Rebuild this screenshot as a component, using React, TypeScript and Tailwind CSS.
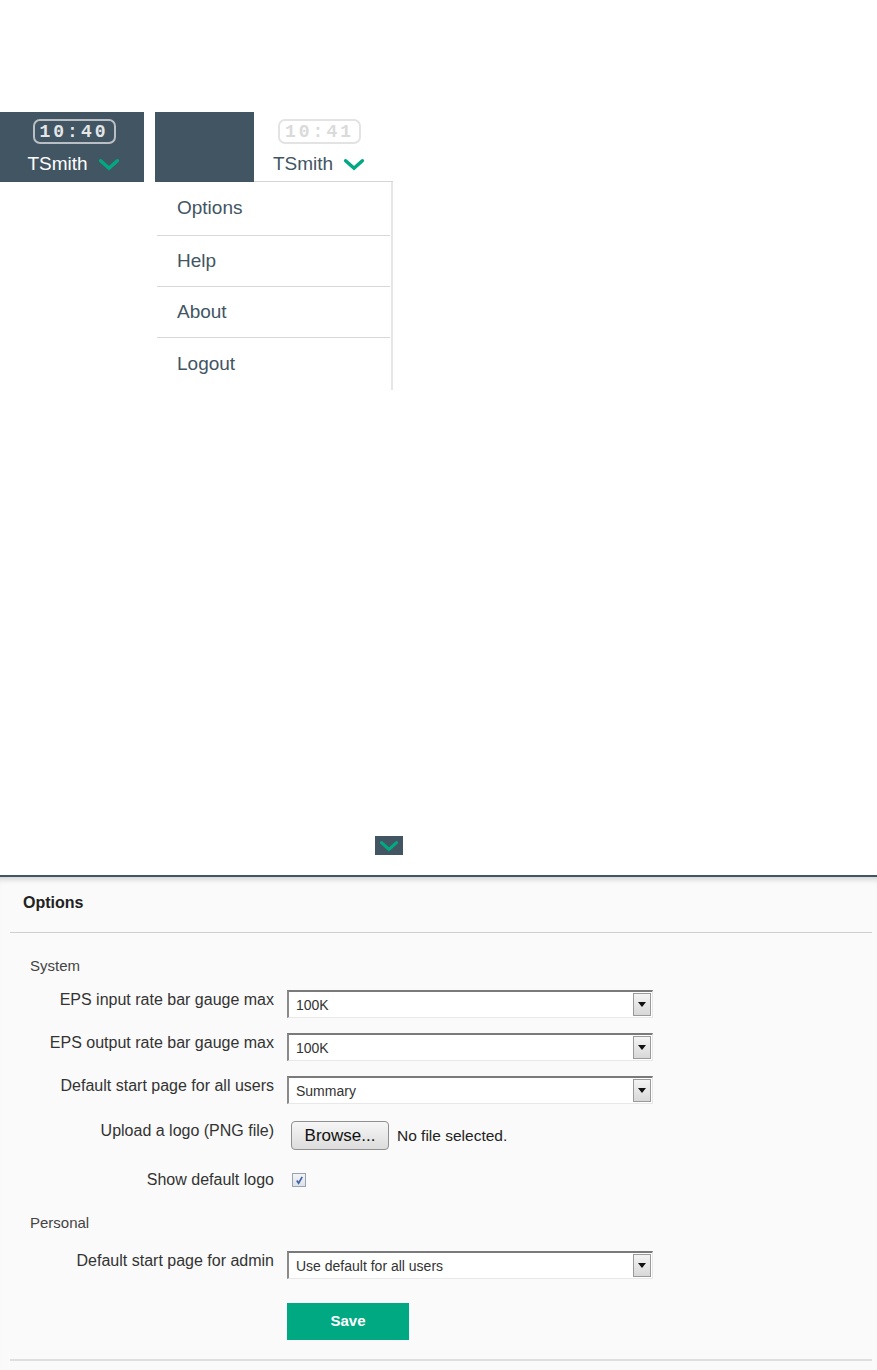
import React from 'react'

const font = { fontFamily: '"Liberation Sans", Arial, sans-serif' }

function Chevron({ className = '' }: { className?: string }) {
  return (
    <svg viewBox="0 0 24 14" className={className} fill="none">
      <polyline points="3,3 12,11 21,3" stroke="#01a982" strokeWidth="3.8" strokeLinecap="round" strokeLinejoin="miter" />
    </svg>
  )
}

function Clock({ time, light }: { time: string; light?: boolean }) {
  return (
    <div
      className={`flex h-[25px] w-[83px] items-center justify-center rounded-[7px] border-2 ${
        light ? 'border-[#e3e3e3] text-[#dadada]' : 'border-[#b9bfc4] text-[#e4e6e8]'
      }`}
    >
      <span className="text-[18px] font-bold leading-none tracking-[3px]" style={{ fontFamily: '"Liberation Mono", monospace' }}>
        {time}
      </span>
    </div>
  )
}

function UserName({ dark }: { dark?: boolean }) {
  return (
    <div className="flex items-center gap-[9px]">
      <span className={`text-[19px] leading-[22px] ${dark ? 'text-white' : 'text-[#425563]'}`}>TSmith</span>
      <Chevron className="h-[13px] w-[24px]" />
    </div>
  )
}

function Row({ label, children, center }: { label: string; children: React.ReactNode; center?: boolean }) {
  return (
    <div className={`flex ${center ? 'items-center' : 'items-start'}`}>
      <div className="w-[274px] text-right text-[16px] leading-[20px] text-[#333]">{label}</div>
      <div className="ml-[13px]">{children}</div>
    </div>
  )
}

function Select({ value }: { value: string }) {
  return (
    <div className="flex h-[28px] w-[366px] border-t-2 border-l-2 border-b border-r border-t-[#7a7a7a] border-l-[#8a8a8a] border-b-[#e8e8e8] border-r-[#e8e8e8] bg-white">
      <div className="flex flex-1 items-center pl-[7px] pt-[2px] text-[14px] text-[#333]">{value}</div>
      <div className="my-[1px] mr-[1px] flex w-[18px] items-center justify-center border border-[#9a9a9a] bg-gradient-to-b from-[#f4f4f4] to-[#d8d8d8]">
        <svg viewBox="0 0 8 5" className="h-[5px] w-[8px]">
          <polygon points="0,0 8,0 4,5" fill="#111" />
        </svg>
      </div>
    </div>
  )
}

const menuItems = [
  { label: 'Options', h: 'h-[54px]' },
  { label: 'Help', h: 'h-[51px]' },
  { label: 'About', h: 'h-[51px]' },
  { label: 'Logout', h: 'h-[52px]' },
]

export default function App() {
  return (
    <div className="min-h-[1370px] w-[877px] bg-white pt-[112px]" style={font}>
      <div className="flex items-start">
        <div className="flex h-[70px] w-[144px] flex-col items-center bg-[#425563] pt-[7px] pl-[4px]">
          <Clock time="10:40" />
          <div className="mt-[9px]">
            <UserName dark />
          </div>
        </div>

        <div className="ml-[11px] w-[238px]">
          <div className="flex h-[70px]">
            <div className="w-[99px] bg-[#425563]" />
            <div className="flex flex-1 flex-col items-center border-b border-[#d6d6d6] bg-white pt-[7px] pr-[8px]">
              <Clock time="10:41" light />
              <div className="mt-[9px]">
                <UserName />
              </div>
            </div>
          </div>
          <div className="border-r-2 border-[#e6e6e6] bg-white">
            {menuItems.map((item, i) => (
              <div
                key={item.label}
                className={`ml-[2px] mr-[1px] flex ${item.h} items-center pl-[20px] text-[19px] text-[#425563] ${
                  i < menuItems.length - 1 ? 'border-b border-[#d8d8d8]' : ''
                }`}
              >
                {item.label}
              </div>
            ))}
          </div>
        </div>
      </div>

      <div className="ml-[375px] mt-[446px] flex h-[19px] w-[28px] items-center justify-center bg-[#425563]">
        <Chevron className="h-[12px] w-[20px]" />
      </div>

      <div className="mt-[20px] border-t-2 border-[#425563] bg-[#fafafa] shadow-[inset_0_7px_6px_-5px_rgba(0,0,0,0.18)]">
        <div className="ml-[10px] mr-[5px] border-b border-[#cfcfcf] pl-[13px] pt-[16px] pb-[19px]">
          <div className="text-[16px] font-bold leading-[20px] text-[#222]">Options</div>
        </div>

        <div className="pl-[30px] pt-[23px] text-[15px] leading-[20px] text-[#444]">System</div>

        <div className="mt-[14px] flex flex-col gap-[15px]">
          <Row label="EPS input rate bar gauge max">
            <Select value="100K" />
          </Row>
          <Row label="EPS output rate bar gauge max">
            <Select value="100K" />
          </Row>
          <Row label="Default start page for all users">
            <Select value="Summary" />
          </Row>
        </div>

        <div className="mt-[17px]">
          <Row label="Upload a logo (PNG file)">
            <div className="ml-[4px] flex items-center">
              <div className="flex h-[29px] w-[98px] items-center justify-center rounded-[4px] border border-[#8f8f8f] bg-gradient-to-b from-[#f6f6f6] to-[#dcdcdc] text-[17px] text-[#111]">
                Browse...
              </div>
              <span className="ml-[8px] text-[15.5px] text-[#222]">No file selected.</span>
            </div>
          </Row>
        </div>

        <div className="mt-[20px]">
          <Row label="Show default logo" center>
            <div className="ml-[5px] flex h-[14px] w-[14px] items-center justify-center border border-[#9aa3ad] bg-gradient-to-b from-[#f2f4f7] to-[#dde2e8]">
              <svg viewBox="0 0 10 10" className="h-[9px] w-[9px]">
                <polyline points="2,5 4,8 8,1" fill="none" stroke="#3b5fa8" strokeWidth="1.8" />
              </svg>
            </div>
          </Row>
        </div>

        <div className="pl-[30px] pt-[23px] text-[15px] leading-[20px] text-[#444]">Personal</div>

        <div className="mt-[18px]">
          <Row label="Default start page for admin">
            <Select value="Use default for all users" />
          </Row>
        </div>

        <div className="ml-[287px] mt-[24px] flex h-[37px] w-[122px] items-center justify-center bg-[#01a982] text-[15px] font-bold text-white">
          Save
        </div>

        <div className="ml-[10px] mr-[5px] mt-[19px] border-b-2 border-[#dedede]" />
        <div className="h-[9px]" />
      </div>
    </div>
  )
}
